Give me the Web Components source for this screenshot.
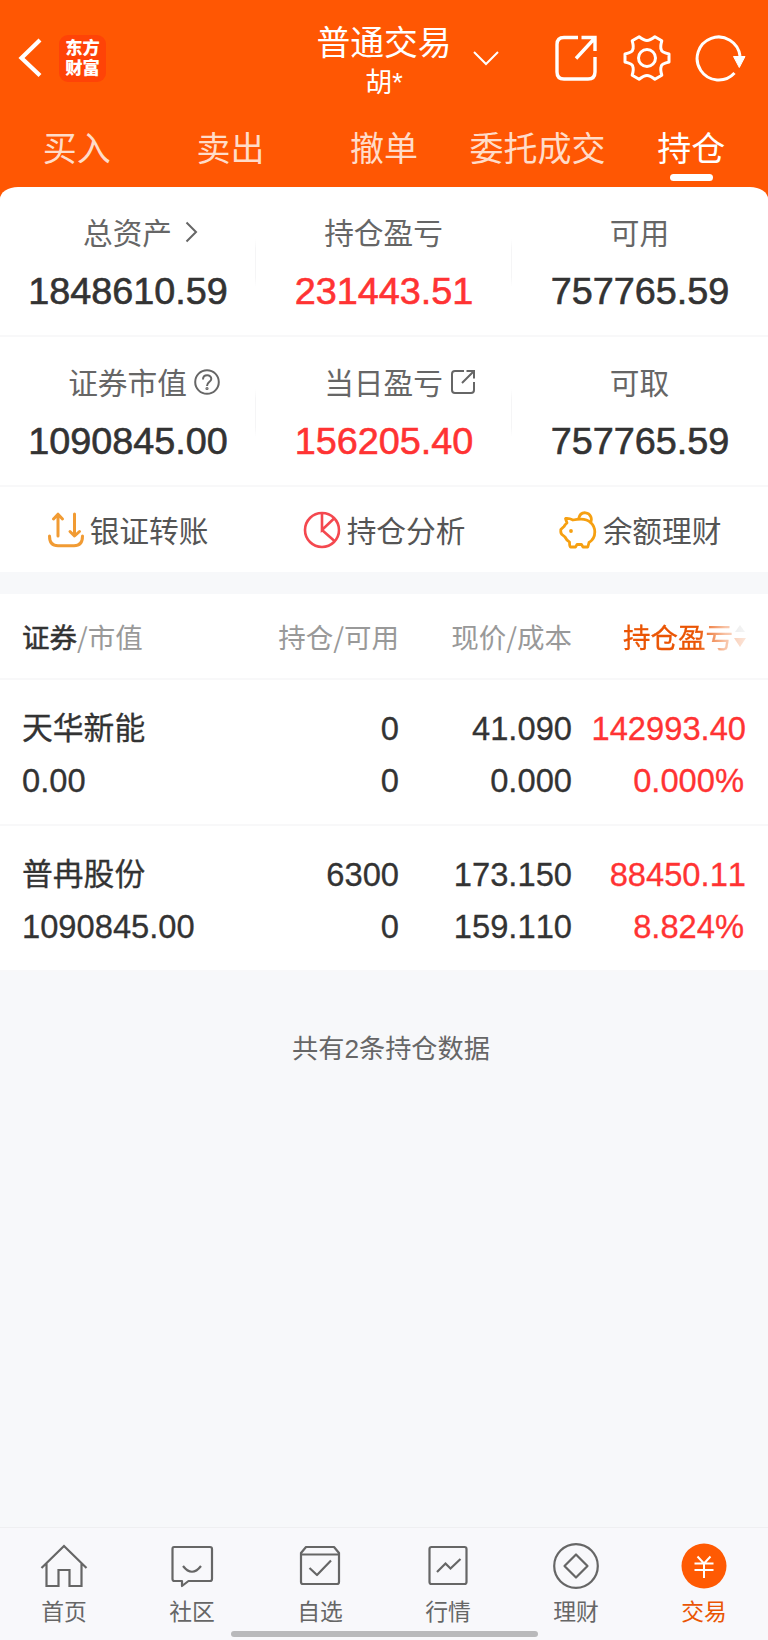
<!DOCTYPE html>
<html lang="zh-CN">
<head>
<meta charset="utf-8">
<title>普通交易</title>
<style>
    body {
        margin: 0;
        background: #f7f8fa;
        color: #333;
        font-family: "Noto Sans CJK SC", "Noto Sans", sans-serif;
    }
</style>
</head>
<body>
<trade-page></trade-page>

<script>
const ICONS = {
    back: `<svg width="24" height="40" viewBox="0 0 24 40" fill="none" stroke="currentColor" stroke-width="4.2"><path d="M22 2 3.5 20 22 37.500"/></svg>`,
    down: `<svg width="26" height="16" viewBox="0 0 26 16" fill="none" stroke="currentColor" stroke-width="2"><path d="M1 2 13 14 25 2"/></svg>`,
    share: `<svg width="44" height="48" viewBox="0 0 44 48" fill="none" stroke="currentColor" stroke-width="3.400"><path d="M24 3.500H10Q3 3.500 3 10.500V38Q3 45 10 45H34Q41 45 41 38V23M27.500 3.500H41V17M22 24.500 40 5"/></svg>`,
    gear: `<svg width="48" height="48" viewBox="0 0 48 48" fill="none" stroke="currentColor" stroke-width="3" stroke-linejoin="round"><path d="M46 20V28Q38.300 30 38.300 32.300 37 35 38.800 41.200L31.900 45.200Q27 41.500 24 41.500 21 41.500 16.100 45.200L9.200 41.200Q11 35 9.700 32.300 9.700 30 2 28V20Q9.700 18 9.700 15.700 11 13 9.200 6.800L16.100 2.800Q21 6.500 24 6.500 27 6.500 31.900 2.800L38.800 6.800Q37 13 38.300 15.700 38.300 18 46 20Z"/><circle cx="24" cy="24" r="8.500"/></svg>`,
    refresh: `<svg width="52" height="48" viewBox="0 0 52 48" fill="none" stroke="currentColor" stroke-width="3"><path d="M45 22A21.500 21.500 0 1 0 39.500 39"/><path d="M38.500 22.500H50L44.300 33.500Z" fill="currentColor" stroke-width="1"/></svg>`,
    right: `<svg width="13" height="22" viewBox="0 0 13 22" fill="none" stroke="currentColor" stroke-width="2"><path d="M1.500 1.500 11 11 1.500 20.500"/></svg>`,
    help: `<svg width="26" height="26" viewBox="0 0 26 26" fill="none" stroke="currentColor" stroke-width="2"><circle cx="13" cy="13" r="11.800"/><path d="M9 10.500C9 4.800 17.500 5 17.300 10 17.200 13 13 12.800 13 17"/><circle cx="13" cy="19.500" r=".6"/></svg>`,
    open: `<svg width="26" height="26" viewBox="0 0 26 26" fill="none" stroke="currentColor" stroke-width="2"><path d="M14 2H5Q2 2 2 5V21Q2 24 5 24H21Q24 24 24 21V13M16.500 2H24V9.500M12 14 23.500 2.500"/></svg>`,
    transfer: `<svg width="36" height="36" viewBox="0 0 36 36" fill="none" stroke="#f19b33" stroke-width="3" stroke-linecap="round" stroke-linejoin="round"><path d="M1.500 24Q1.500 33.800 10 33.800H26Q34.500 33.800 34.500 24M10 24V2.500M5.500 7 10 2.200 14.500 7M26.500 2V23.500M22 19.500 26.500 24 31.500 19.500"/></svg>`,
    pie: `<svg width="38" height="38" viewBox="0 0 38 38" fill="none" stroke="#f4484f" stroke-width="2.600"><circle cx="19" cy="19" r="17"/><path d="M19 2V19L31 7.500M19 19 31.500 30"/></svg>`,
    pig: `<svg width="38" height="38" viewBox="0 0 38 38" fill="none" stroke="#f6a011" stroke-width="2.800" stroke-linejoin="round"><path d="M6.500 7.500Q10 7 14 9 18 8.200 22 8.200C30 8.200 35.800 13.500 35.800 21Q35.800 28 30 31.500L28.800 36H24L22.500 33.500H18L16.500 36H11.500Q10.500 36 10.500 31 8 30 6 26L3 23.500Q1.500 22.500 1.800 18.500L5 15.500Q6 13.500 8 12Z"/><path d="M19.500 8C20.500 3.500 23 1.500 26.500 1.800 31.500 2.200 34 8 31 12.500"/><circle cx="12" cy="20" r="1.900" fill="#f6a011" stroke="none"/></svg>`,
    sort: `<svg width="12" height="24" viewBox="0 0 12 24"><path d="M6 1 11 8H1Z" fill="#bbb"/><path d="M0 14H12L6 23Z" fill="#ea5504"/></svg>`,
    home: `<svg width="48" height="48" viewBox="0 0 48 48" fill="none" stroke="currentColor" stroke-width="2.200"><path d="M1.500 26 24 4 46.500 26M6.500 21.500V44H18.500V28H29.500V44H41.500V21.500"/></svg>`,
    chat: `<svg width="48" height="48" viewBox="0 0 48 48" fill="none" stroke="currentColor" stroke-width="2.200" stroke-linejoin="round"><path d="M6 5H42Q44 5 44 7V37Q44 39 42 39H20.500L14 44V39H6.500Q4.500 39 4.500 37V7Q4.500 5 6 5ZM15 24Q24 35.500 33 24"/></svg>`,
    check: `<svg width="48" height="48" viewBox="0 0 48 48" fill="none" stroke="currentColor" stroke-width="2.200" stroke-linejoin="round"><path d="M5 11 10 5H38L43 11V40Q43 42 41 42H7Q5 42 5 40ZM5 12.500H43M13.500 26 21 33 35 18.500"/></svg>`,
    chart: `<svg width="48" height="48" viewBox="0 0 48 48" fill="none" stroke="currentColor" stroke-width="2.200"><rect x="5.500" y="5" width="37" height="37" rx="2"/><path d="M13 30 21.500 21.500 26.500 26.500 36.500 17"/></svg>`,
    coin: `<svg width="48" height="48" viewBox="0 0 48 48" fill="none" stroke="currentColor" stroke-width="2.200" stroke-linejoin="round"><circle cx="24" cy="24" r="21.800"/><path d="M24 12.500 35.500 24 24 35.500 12.500 24Z"/></svg>`,
    trade: `<svg width="48" height="48" viewBox="0 0 48 48" fill="none" stroke="#fff" stroke-width="2"><circle cx="24" cy="24" r="22.500" fill="#ff5a03" stroke="none"/><path d="M17.500 14.500 24 21.500 30.500 14.500M14.500 21.500H33.500M14.500 28H33.500M24 21.500V36"/></svg>`
};

class TradeIcon extends HTMLElement {
    constructor() {
        super();
        this.attachShadow({mode: 'open'});
    }

    connectedCallback() {
        this.shadowRoot.innerHTML = `
            <style>
                :host { display: block; flex: none; }
                svg { display: block; }
            </style>
            ${ICONS[this.getAttribute('name')]}
        `;
    }
}
customElements.define('trade-icon', TradeIcon);

class TradeHeader extends HTMLElement {
    constructor() {
        super();
        this.attachShadow({mode: 'open'});
        this.shadowRoot.innerHTML = `
            <style>
                :host {
                    display: grid;
                    grid-template-columns: 1fr 136px 1fr;
                    height: 116px;
                    color: #fff;
                    font-family: "Liberation Sans", "Noto Sans CJK SC", sans-serif;
                }
                .left, .right { display: flex; align-items: center; }
                .left { padding-left: 18px; gap: 17px; }
                .right { padding-left: 21px; }
                .logo {
                    width: 47px;
                    height: 47px;
                    box-sizing: border-box;
                    padding-top: 3px;
                    border-radius: 9px;
                    background: #ff4307;
                    font-size: 17.3px;
                    font-weight: 900;
                    line-height: 20.5px;
                    text-align: center;
                }
                .title { text-align: center; white-space: nowrap; }
                .name { margin-top: 22px; font-size: 33.8px; line-height: 42px; }
                .user { font-size: 27px; line-height: 38px; }
                .share { margin-left: 55px; }
                .gear { margin-left: 25px; }
                .refresh { margin-left: 24px; }
            </style>
            <div class="left">
                <trade-icon name="back"></trade-icon>
                <div class="logo">东方<br>财富</div>
            </div>
            <div class="title">
                <div class="name"><slot></slot></div>
                <div class="user"><slot name="user"></slot></div>
            </div>
            <div class="right">
                <trade-icon name="down"></trade-icon>
                <trade-icon class="share" name="share"></trade-icon>
                <trade-icon class="gear" name="gear"></trade-icon>
                <trade-icon class="refresh" name="refresh"></trade-icon>
            </div>
        `;
    }
}
customElements.define('trade-header', TradeHeader);

class TradeTab extends HTMLElement {
    constructor() {
        super();
        this.attachShadow({mode: 'open'});
        this.shadowRoot.innerHTML = `
            <style>
                :host {
                    display: flex;
                    flex: 1;
                    flex-direction: column;
                    align-items: center;
                    padding-top: 2px;
                    color: #ffdcc9;
                    font-size: 34px;
                    line-height: 58px;
                    white-space: nowrap;
                }
                :host([active]) { color: #fff; }
                :host([active])::after {
                    content: '';
                    width: 43px;
                    height: 7px;
                    margin-top: -2px;
                    border-radius: 3.5px;
                    background: #fff;
                }
            </style>
            <slot></slot>
        `;
    }
}
customElements.define('trade-tab', TradeTab);

class AssetCell extends HTMLElement {
    constructor() {
        super();
        this.attachShadow({mode: 'open'});
        this.shadowRoot.innerHTML = `
            <style>
                :host {
                    display: block;
                    box-sizing: border-box;
                    height: 150px;
                    padding-top: 24px;
                    text-align: center;
                    border-bottom: 2px solid #f8f8f9;
                    background: linear-gradient(#fff, #f5f5f6 20%, #f5f5f6 80%, #fff) right 52px / 1px 48px no-repeat;
                }
                :host([last]) { background: none; }
                .label {
                    display: flex;
                    justify-content: center;
                    align-items: center;
                    padding-right: 1px;
                    color: #666;
                    font-size: 29.7px;
                    line-height: 42px;
                }
                /* the mark hangs off the label without shifting its centre */
                .mark { display: flex; width: 0; }
                .value {
                    margin-top: 15px;
                    font: 37.8px/46px "Liberation Sans", Arial, sans-serif;
                    font-kerning: none;
                    -webkit-text-stroke: .6px currentColor;
                }
                :host([up]) .value { color: #ff3333; }
            </style>
            <div class="label"><slot name="label"></slot><span class="mark"><slot name="mark"></slot></span></div>
            <div class="value"><slot></slot></div>
        `;
    }
}
customElements.define('asset-cell', AssetCell);

class QuickAction extends HTMLElement {
    constructor() {
        super();
        this.attachShadow({mode: 'open'});
        this.shadowRoot.innerHTML = `
            <style>
                :host {
                    display: flex;
                    justify-content: center;
                    align-items: center;
                    gap: 6px;
                    height: 85px;
                    color: #555;
                    font-size: 29.7px;
                }
                span { line-height: 42px; }
            </style>
            <trade-icon name="${this.getAttribute('icon')}"></trade-icon>
            <span><slot></slot></span>
        `;
    }
}
customElements.define('quick-action', QuickAction);

class HoldingHead extends HTMLElement {
    constructor() {
        super();
        this.attachShadow({mode: 'open'});
        this.shadowRoot.innerHTML = `
            <style>
                :host {
                    display: grid;
                    grid-template-columns: 230px 147px 173px 174px;
                    align-items: center;
                    box-sizing: border-box;
                    height: 86px;
                    padding: 0 22px;
                    border-bottom: 2px solid #f8f8f9;
                    background: #fff;
                    color: #999;
                    font-size: 27.5px;
                    line-height: 40px;
                    text-align: right;
                    white-space: nowrap;
                }
                .name { text-align: left; }
                b {
                    color: #333;
                    font-weight: 400;
                    -webkit-text-stroke: .5px currentColor;
                }
                .sort {
                    display: flex;
                    justify-content: flex-end;
                    align-items: center;
                    gap: 1px;
                    color: #ea5504;
                    -webkit-text-stroke: .3px currentColor;
                    -webkit-mask: linear-gradient(90deg, #000 72%, rgba(0, 0, 0, .35) 88%, rgba(0, 0, 0, .15));
                    mask: linear-gradient(90deg, #000 72%, rgba(0, 0, 0, .35) 88%, rgba(0, 0, 0, .15));
                }
            </style>
            <span class="name"><b>证券</b>/市值</span>
            <span>持仓/可用</span>
            <span>现价/成本</span>
            <span class="sort">持仓盈亏<trade-icon name="sort"></trade-icon></span>
        `;
    }
}
customElements.define('holding-head', HoldingHead);

class HoldingRow extends HTMLElement {
    constructor() {
        super();
        this.attachShadow({mode: 'open'});
    }

    connectedCallback() {
        const get = (name) => this.getAttribute(name);
        this.shadowRoot.innerHTML = `
            <style>
                :host {
                    display: grid;
                    grid-template-columns: 204px 173px 173px 174px;
                    grid-template-rows: 52px 51px;
                    box-sizing: border-box;
                    height: 146px;
                    padding: 23px 22px 0;
                    border-bottom: 2px solid #f8f8f9;
                    background: #fff;
                    font: 32.7px/51px "Liberation Sans", Arial, sans-serif;
                    font-kerning: none;
                    text-align: right;
                    white-space: nowrap;
                    -webkit-text-stroke: .3px currentColor;
                }
                .name {
                    font: 30.8px/46px "Noto Sans CJK SC", sans-serif;
                }
                .name, .market { text-align: left; }
                .up { color: #ff3333; }
                .rate { padding-right: 2px; }
            </style>
            <span class="name"><slot></slot></span>
            <span>${get('amount')}</span>
            <span>${get('price')}</span>
            <span class="up">${get('profit')}</span>
            <span class="market">${get('market')}</span>
            <span>${get('usable')}</span>
            <span>${get('cost')}</span>
            <span class="up rate">${get('rate')}</span>
        `;
    }
}
customElements.define('holding-row', HoldingRow);

class NavItem extends HTMLElement {
    constructor() {
        super();
        this.attachShadow({mode: 'open'});
        this.shadowRoot.innerHTML = `
            <style>
                :host {
                    display: flex;
                    flex: 1;
                    flex-direction: column;
                    align-items: center;
                    padding-top: 14px;
                    color: #666;
                    font-size: 22.8px;
                    line-height: 34px;
                }
                :host([active]) { color: #ea5504; }
                span { margin-top: 4px; }
            </style>
            <trade-icon name="${this.getAttribute('icon')}"></trade-icon>
            <span><slot></slot></span>
        `;
    }
}
customElements.define('nav-item', NavItem);

class TradePage extends HTMLElement {
    constructor() {
        super();
        this.attachShadow({mode: 'open'});
        this.shadowRoot.innerHTML = `
            <style>
                :host {
                    display: flex;
                    flex-direction: column;
                    width: 768px;
                    height: 1640px;
                    overflow: hidden;
                }
                .top { height: 199px; background: #ff5703; }
                .tabs { display: flex; }
                .assets {
                    display: grid;
                    grid-template-columns: repeat(3, 256px);
                    margin-top: -12px;
                    border-radius: 18px 18px 0 0 / 12px 12px 0 0;
                    overflow: hidden;
                    background: #fff;
                }
                .list { margin-top: 22px; }
                .total {
                    margin: 55px 0 0;
                    padding-left: 14px;
                    color: #666;
                    font-size: 26.2px;
                    line-height: 40px;
                    text-align: center;
                }
                .two { font-family: "Liberation Sans", Arial, sans-serif; }
                .nav {
                    display: flex;
                    height: 103px;
                    border-top: 1px solid #efeff1;
                }
                .bar {
                    align-self: center;
                    width: 307px;
                    height: 6px;
                    margin-bottom: 3px;
                    border-radius: 3px;
                    background: #b9b9bb;
                }
                footer {
                    display: flex;
                    flex-direction: column;
                    margin-top: auto;
                    background: #f8f8fb;
                }
            </style>
            <div class="top">
                <trade-header>普通交易<span slot="user">胡*</span></trade-header>
                <div class="tabs">
                    <trade-tab>买入</trade-tab>
                    <trade-tab>卖出</trade-tab>
                    <trade-tab>撤单</trade-tab>
                    <trade-tab>委托成交</trade-tab>
                    <trade-tab active>持仓</trade-tab>
                </div>
            </div>
            <div class="assets">
                <asset-cell><span slot="label">总资产</span><trade-icon slot="mark" name="right" style="margin-left: 13px"></trade-icon>1848610.59</asset-cell>
                <asset-cell up><span slot="label">持仓盈亏</span>231443.51</asset-cell>
                <asset-cell last><span slot="label">可用</span>757765.59</asset-cell>
                <asset-cell><span slot="label">证券市值</span><trade-icon slot="mark" name="help" style="margin-left: 7px"></trade-icon>1090845.00</asset-cell>
                <asset-cell up><span slot="label">当日盈亏</span><trade-icon slot="mark" name="open" style="margin-left: 7px"></trade-icon>156205.40</asset-cell>
                <asset-cell last><span slot="label">可取</span>757765.59</asset-cell>
                <quick-action icon="transfer">银证转账</quick-action>
                <quick-action icon="pie">持仓分析</quick-action>
                <quick-action icon="pig">余额理财</quick-action>
            </div>
            <div class="list">
                <holding-head></holding-head>
                <holding-row amount="0" usable="0" price="41.090" cost="0.000" profit="142993.40" rate="0.000%" market="0.00">天华新能</holding-row>
                <holding-row amount="6300" usable="0" price="173.150" cost="159.110" profit="88450.11" rate="8.824%" market="1090845.00">普冉股份</holding-row>
            </div>
            <p class="total">共有<span class="two">2</span>条持仓数据</p>
            <footer>
                <div class="nav">
                    <nav-item icon="home">首页</nav-item>
                    <nav-item icon="chat">社区</nav-item>
                    <nav-item icon="check">自选</nav-item>
                    <nav-item icon="chart">行情</nav-item>
                    <nav-item icon="coin">理财</nav-item>
                    <nav-item icon="trade" active>交易</nav-item>
                </div>
                <div class="bar"></div>
            </footer>
        `;
    }
}
customElements.define('trade-page', TradePage);
</script>
</body>
</html>
